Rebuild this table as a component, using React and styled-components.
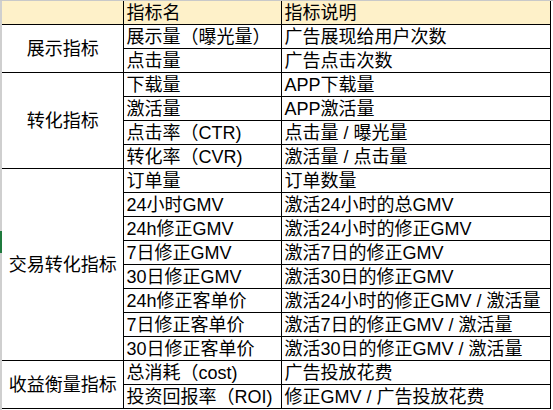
import React from 'react'
import styled, { createGlobalStyle } from 'styled-components'

const GlobalStyle = createGlobalStyle`
  html, body {
    margin: 0;
    padding: 0;
    background: #ffffff;
  }
  body {
    font-family: "Liberation Sans", "Noto Sans CJK SC", sans-serif;
    color: #000;
  }
`

const groups = [
  {
    name: '展示指标',
    rows: [
      ['展示量（曝光量）', '广告展现给用户次数'],
      ['点击量', '广告点击次数']
    ]
  },
  {
    name: '转化指标',
    rows: [
      ['下载量', 'APP下载量'],
      ['激活量', 'APP激活量'],
      ['点击率（CTR)', '点击量 / 曝光量'],
      ['转化率（CVR)', '激活量 / 点击量']
    ]
  },
  {
    name: '交易转化指标',
    rows: [
      ['订单量', '订单数量'],
      ['24小时GMV', '激活24小时的总GMV'],
      ['24h修正GMV', '激活24小时的修正GMV'],
      ['7日修正GMV', '激活7日的修正GMV'],
      ['30日修正GMV', '激活30日的修正GMV'],
      ['24h修正客单价', '激活24小时的修正GMV / 激活量'],
      ['7日修正客单价', '激活7日的修正GMV / 激活量'],
      ['30日修正客单价', '激活30日的修正GMV / 激活量']
    ]
  },
  {
    name: '收益衡量指标',
    rows: [
      ['总消耗（cost)', '广告投放花费'],
      ['投资回报率（ROI)', '修正GMV / 广告投放花费']
    ]
  }
]

const Sheet = styled.div`
  position: relative;
  width: 553px;
  height: 410px;
  overflow: hidden;
  border-top: 1px solid #c9c9c9;
  box-sizing: border-box;

  &::before {
    content: '';
    position: absolute;
    left: 0;
    top: 0;
    bottom: 0;
    width: 2px;
    background: #cfcfcf;
    z-index: 2;
  }
`

const Marker = styled.div`
  position: absolute;
  left: 0;
  top: 230px;
  width: 2px;
  height: 22px;
  background: #1f7a3d;
  z-index: 3;
`

const Table = styled.table`
  border-collapse: collapse;
  table-layout: fixed;
  width: 550px;
  font-size: 18px;
`

const Row = styled.tr`
  height: ${p => (p.$head ? 23 : 24)}px;
`

const Cell = styled.td`
  border: 1px solid #000;
  padding: 2px 0 0 3px;
  line-height: 20px;
  white-space: nowrap;
  overflow: hidden;
  vertical-align: middle;
  background: ${p => (p.$head ? '#fef1c9' : '#fff')};
  text-align: ${p => (p.$center ? 'center' : 'left')};

  &:first-child {
    border-left: none;
  }
`

const HeadRow = styled(Row)`
  & > td {
    border-top: none;
  }
`

const App = () => (
  <>
    <GlobalStyle />
    <Sheet>
      <Marker />
      <Table>
        <colgroup>
          <col style={{ width: 123 }} />
          <col style={{ width: 158 }} />
          <col style={{ width: 269 }} />
        </colgroup>
        <tbody>
          <HeadRow $head>
            <Cell $head />
            <Cell $head>指标名</Cell>
            <Cell $head>指标说明</Cell>
          </HeadRow>
          {groups.map(group =>
            group.rows.map((row, i) => (
              <Row key={group.name + i}>
                {i === 0 ? (
                  <Cell $center rowSpan={group.rows.length}>{group.name}</Cell>
                ) : null}
                <Cell>{row[0]}</Cell>
                <Cell>{row[1]}</Cell>
              </Row>
            ))
          )}
        </tbody>
      </Table>
    </Sheet>
  </>
)

export default App
